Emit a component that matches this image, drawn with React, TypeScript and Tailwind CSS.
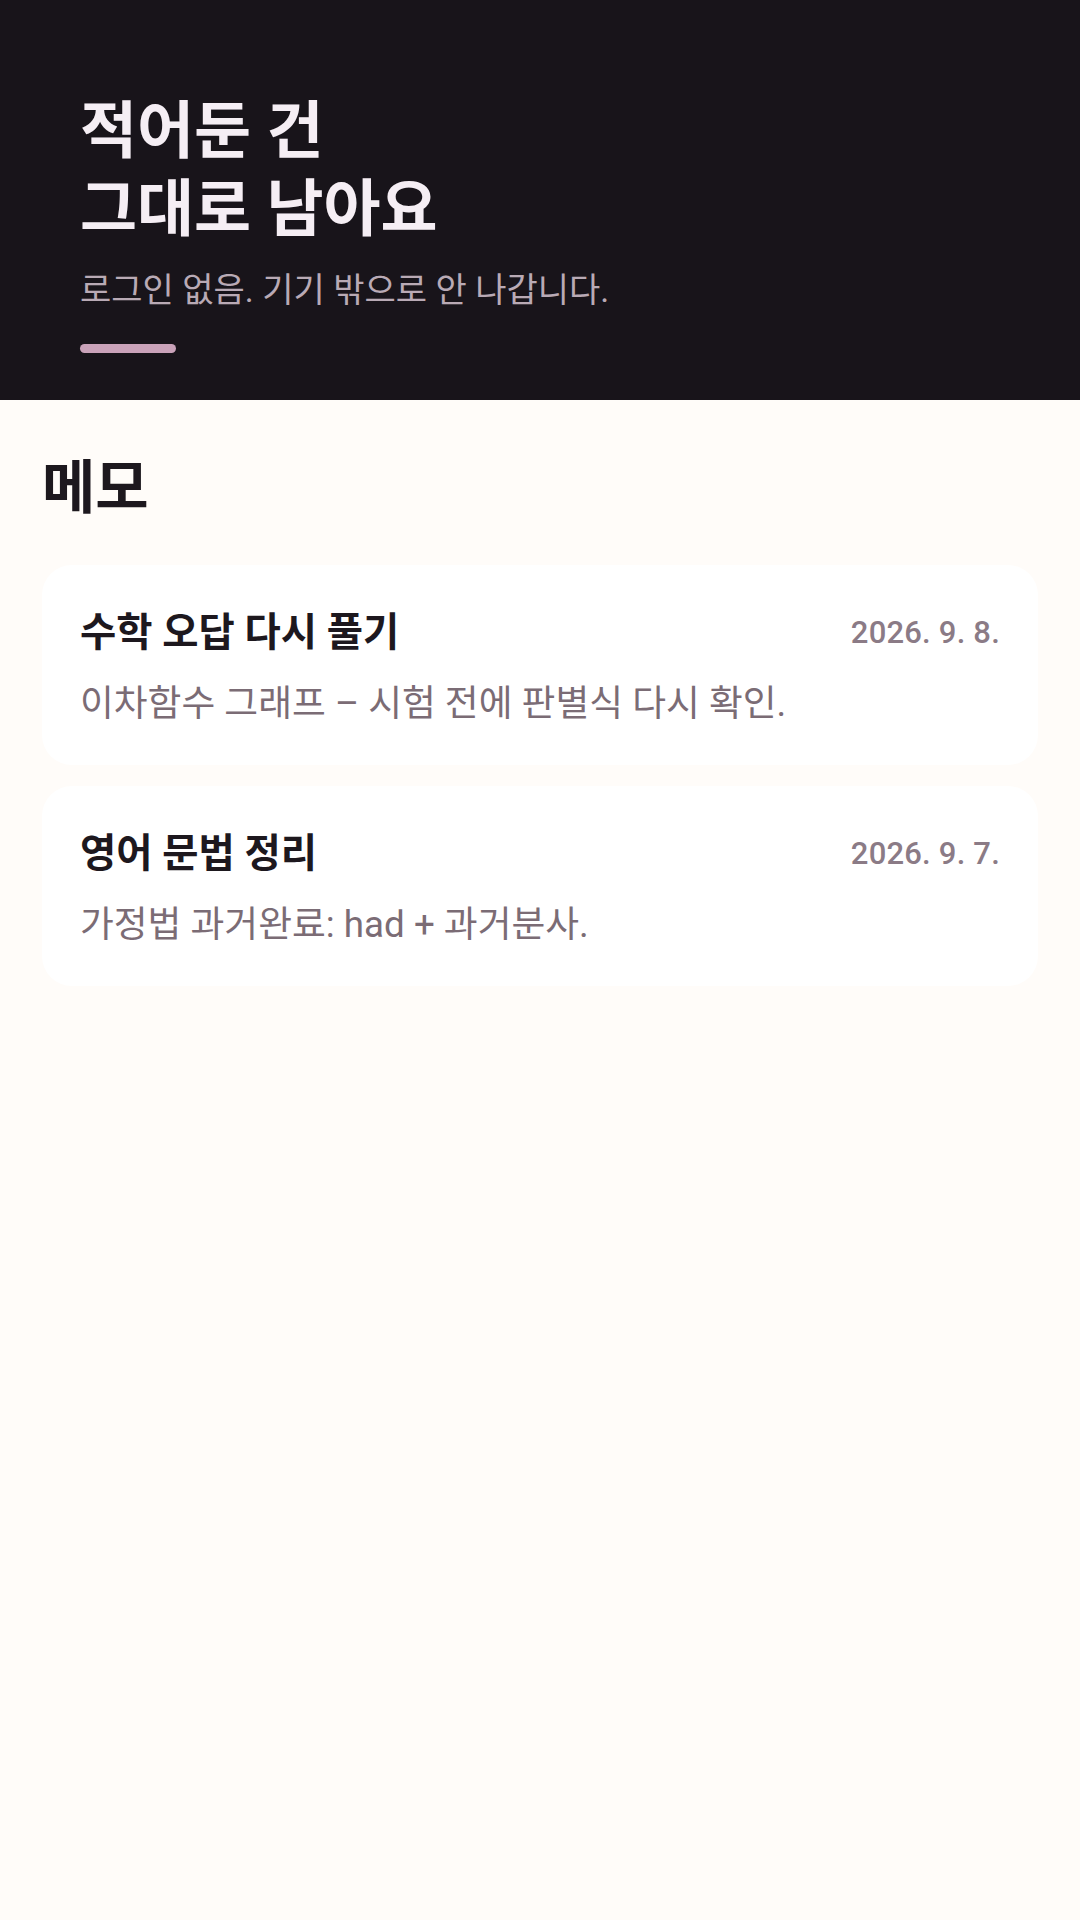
import React from "react";

const memos = [
  { title: "수학 오답 다시 풀기", date: "2026. 9. 8.", body: "이차함수 그래프 – 시험 전에 판별식 다시 확인." },
  { title: "영어 문법 정리", date: "2026. 9. 7.", body: "가정법 과거완료: had + 과거분사." },
];

export default function App() {
  return (
    <div className="min-h-[1920px] w-[1080px] bg-[#fffcf9] font-['Roboto','Noto_Sans_CJK_KR',sans-serif]">
      <header className="flex h-[400px] flex-col bg-[#18141a] px-[80px] pt-[93px]">
        <h1 className="text-[62px] font-bold leading-[78px] text-[#f5eef4]">
          적어둔 건
          <br />
          그대로 남아요
        </h1>
        <p className="mt-[17px] text-[34px] leading-[48px] text-[#b9aab5]">로그인 없음. 기기 밖으로 안 나갑니다.</p>
        <div className="mt-[30px] h-[9px] w-[96px] rounded-full bg-[#c9a2b9]" />
      </header>
      <main className="px-[42px] pt-[56px]">
        <h2 className="text-[58px] font-bold leading-[64px] text-[#1d181e]">메모</h2>
        <div className="mt-[45px] flex flex-col gap-[21px]">
          {memos.map((m) => (
            <div key={m.title} className="rounded-[30px] bg-white px-[38px] pt-[42px] pb-[36px]">
              <div className="flex items-center justify-between">
                <div className="text-[39.4px] font-bold leading-[52px] text-[#1d181e]">{m.title}</div>
                <div className="text-[31px] font-medium leading-[40px] tracking-[0.2px] text-[#8b7b86]">{m.date}</div>
              </div>
              <div className="mt-[20px] text-[36.75px] leading-[50px] text-[#7b6c75]">{m.body}</div>
            </div>
          ))}
        </div>
      </main>
    </div>
  );
}
